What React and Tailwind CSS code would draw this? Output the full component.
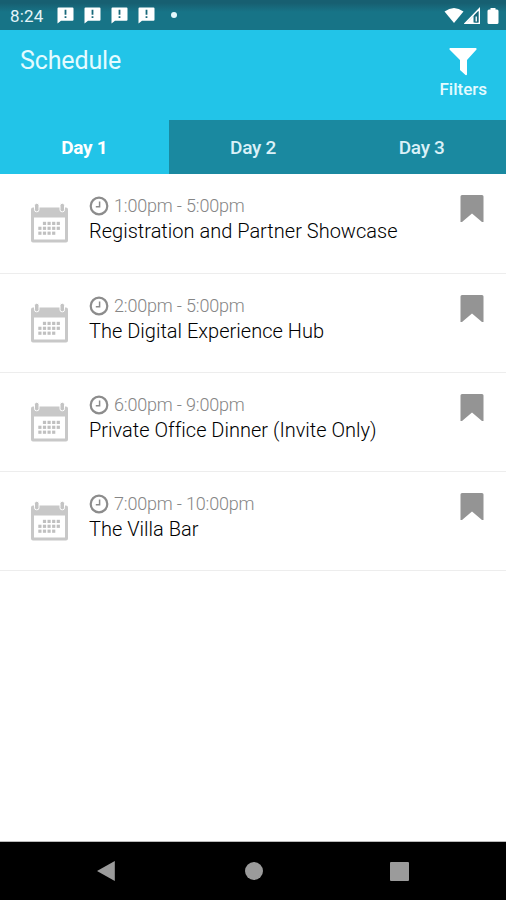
const sessions = [
  { id: 1, time: "1:00pm - 5:00pm", title: "Registration and Partner Showcase" },
  { id: 2, time: "2:00pm - 5:00pm", title: "The Digital Experience Hub" },
  { id: 3, time: "6:00pm - 9:00pm", title: "Private Office Dinner (Invite Only)" },
  { id: 4, time: "7:00pm - 10:00pm", title: "The Villa Bar" },
];

const days = ["Day 1", "Day 2", "Day 3"];

function AlertBubble() {
  return (
    <svg width="17" height="17" viewBox="0 0 17 17">
      <path d="M1.500 0.500h14q1 0 1 1v11.200q0 1-1 1H4L0.500 16.500V1.500q0-1 1-1z" fill="#fff" />
      <path d="M7.600 2.800h1.800v5H7.600zM7.600 9.200h1.800v1.700H7.600z" fill="#17687a" />
    </svg>
  );
}

function CalendarIcon() {
  // columns filled in on each row of the month
  const rows = [
    [1, 2, 3, 4],
    [0, 1, 2, 3, 4],
    [0, 1, 2, 3],
  ];
  return (
    <svg width="40" height="41" viewBox="0 0 40 41">
      <path
        d="M3 4.500h33q2 0 2 2v31q0 2-2 2H3q-2 0-2-2v-31q0-2 2-2zM4 14.500v22h31v-22z"
        fill="#c8c8c8"
        fillRule="evenodd"
      />
      <rect x="4.500" y="0.300" width="4.500" height="8.500" rx="2" fill="#c4c4c4" stroke="#fff" strokeWidth="1" />
      <rect x="30" y="0.300" width="4.500" height="8.500" rx="2" fill="#c4c4c4" stroke="#fff" strokeWidth="1" />
      {rows.map((cols, r) =>
        cols.map((c) => (
          <rect key={`${r}-${c}`} x={8.3 + c * 4.6} y={18.8 + r * 4.9} width="3.200" height="3.200" fill="#c0c0c0" />
        ))
      )}
    </svg>
  );
}

function ClockIcon() {
  return (
    <svg width="20" height="20" viewBox="0 0 20 20" fill="none" stroke="#8c8c8c">
      <circle cx="10" cy="10" r="8.300" strokeWidth="2.200" />
      <path d="M10.600 5.500v5.200H6.800" strokeWidth="1.500" />
    </svg>
  );
}

function StatusBar() {
  return (
    <div className="flex h-[30px] items-center bg-gradient-to-b from-[#175f71] from-10% to-[#177487] to-40% pl-[10px] pr-[7px] text-white">
      <span className="w-[47px] pt-px text-[17px] leading-[30px] tracking-[0.2px] text-[#e4f4f8]">8:24</span>
      <div className="flex gap-[10px] pt-px">
        <AlertBubble />
        <AlertBubble />
        <AlertBubble />
        <AlertBubble />
      </div>
      <span className="ml-[16px] h-[6px] w-[6px] rounded-full bg-[#e4f8fc]" />
      <div className="ml-auto flex items-center pt-px">
        <svg width="20" height="18" viewBox="0 0 20 18">
          <path d="M0.500 4.500Q10-2.500 19.500 4.500L10 16z" fill="#fff" />
        </svg>
        <svg width="17" height="18" viewBox="0 0 17 18">
          <path d="M15.200 2v14.200H1.500z" fill="none" stroke="#fff" strokeWidth="1.600" />
          <path d="M2 16.500L9.500 9v7.500z" fill="#fff" />
          <path d="M10.500 8v7.500h4V4z" fill="#176678" />
          <path d="M11.500 9.500h1.500v5h-1.500z" fill="#e6f4f7" />
        </svg>
        <svg className="ml-[6px]" width="12" height="18" viewBox="0 0 12 18">
          <path d="M3.500 1h5v1.500h1.500q1.500 0 1.500 1.500v11.500q0 1.500-1.500 1.500h-8q-1.500 0-1.500-1.500V4q0-1.500 1.500-1.500h1.500z" fill="#fff" />
        </svg>
      </div>
    </div>
  );
}

function SessionRow({ session }) {
  return (
    <li className="flex h-[99.200px] border-b border-[#ededed] pl-[30px] pr-[22px]">
      <div className="w-[59px] pt-[29px]">
        <CalendarIcon />
      </div>
      <div className="flex-1 pt-[19px]">
        <div className="flex items-center gap-[5px] text-[#868686]">
          <ClockIcon />
          <span className="text-[18px] font-light leading-[26px] tracking-[-0.180px]">{session.time}</span>
        </div>
        <p className="whitespace-nowrap text-[20px] font-light leading-[24px] tracking-[0.010px] text-black">{session.title}</p>
      </div>
      <svg className="mt-[21px]" width="24" height="28" viewBox="0 0 24 28">
        <path d="M2 0h20q1.500 0 1.500 1.500v25.500h-1.500L12 18.500 2 27H0.500V1.500Q0.500 0 2 0z" fill="#949494" />
      </svg>
    </li>
  );
}

export default function App() {
  return (
    <div className="flex h-[900px] w-[506px] flex-col overflow-hidden bg-white font-['Roboto',sans-serif]">
      <StatusBar />

      <header className="flex h-[90px] justify-between bg-[#22c4e8] pl-5 pr-[19px] text-white">
        <h1 className="pt-[16px] text-[25px] leading-[30px] tracking-[-0.130px] text-[#e4fbff]">Schedule</h1>
        <button className="flex flex-col items-center pt-[18px]">
          <svg width="28" height="28" viewBox="0 0 28 28">
            <path d="M1 0h26q1 0.500 0.500 1.500L18 12v14.500q-0.500 1-1.500 0.500l-5.500-5V12L0.500 1.500Q0 0.500 1 0z" fill="#fff" />
          </svg>
          <span className="text-[17px] font-medium leading-[26px] text-[#e4fbff]">Filters</span>
        </button>
      </header>

      <nav className="grid h-[54px] grid-cols-3">
        {days.map((day, i) => (
          <button
            key={day}
            className={
              i === 0
                ? "bg-[#22c4e8] pt-[2px] text-[19px] font-bold tracking-[-0.3px] text-white"
                : "bg-[#1a89a0] pt-[2px] text-[19px] font-medium tracking-[-0.3px] text-[#daf1f8]"
            }
          >
            {day}
          </button>
        ))}
      </nav>

      <ul className="flex-1 pt-[0.400px]">
        {sessions.map((s) => (
          <SessionRow key={s.id} session={s} />
        ))}
      </ul>

      {/* Android navigation buttons */}
      <div className="flex h-[59px] items-center border-t border-[#bbb] bg-black pl-[96px]">
        <svg width="20" height="22" viewBox="0 0 20 22">
          <path d="M18.800 1v20L1 11z" fill="#9b9b9b" />
        </svg>
        <span className="ml-[129px] h-[18px] w-[18px] rounded-full bg-[#9b9b9b]" />
        <span className="ml-[127px] h-[19px] w-[19px] rounded-[1px] bg-[#9b9b9b]" />
      </div>
    </div>
  );
}
